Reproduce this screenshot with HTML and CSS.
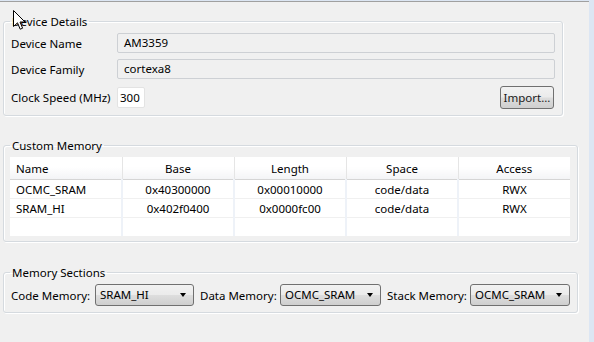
FILE: index.html
```html
<!DOCTYPE html>
<html lang="en">
<head>
    <meta charset="UTF-8">
    <title>Device Details</title>
    <link rel="stylesheet" href="styles.css">
</head>
<body>
    <div class="panel">
        <!-- Device Details -->
        <fieldset class="group group-device">
            <legend>Device Details</legend>
            <div class="row">
                <span class="label">Device Name</span>
                <div class="field readonly">AM3359</div>
            </div>
            <div class="row">
                <span class="label">Device Family</span>
                <div class="field readonly">cortexa8</div>
            </div>
            <div class="row row-clock">
                <span class="label">Clock Speed (MHz)</span>
                <div class="field speed">300</div>
                <button class="btn import-btn">Import...</button>
            </div>
        </fieldset>

        <!-- Custom Memory -->
        <fieldset class="group group-memory">
            <legend>Custom Memory</legend>
            <table class="mem-table">
                <thead>
                    <tr>
                        <th class="left">Name</th>
                        <th>Base</th>
                        <th>Length</th>
                        <th>Space</th>
                        <th>Access</th>
                    </tr>
                </thead>
                <tbody>
                    <tr>
                        <td class="left">OCMC_SRAM</td>
                        <td>0x40300000</td>
                        <td>0x00010000</td>
                        <td>code/data</td>
                        <td>RWX</td>
                    </tr>
                    <tr>
                        <td class="left">SRAM_HI</td>
                        <td>0x402f0400</td>
                        <td>0x0000fc00</td>
                        <td>code/data</td>
                        <td>RWX</td>
                    </tr>
                    <tr class="empty">
                        <td></td><td></td><td></td><td></td><td></td>
                    </tr>
                </tbody>
            </table>
        </fieldset>

        <!-- Memory Sections -->
        <fieldset class="group group-sections">
            <legend>Memory Sections</legend>
            <div class="row">
                <span class="combo-label code-label">Code Memory:</span>
                <div class="combo code-combo">SRAM_HI<span class="arrow"></span></div>
                <span class="combo-label data-label">Data Memory:</span>
                <div class="combo data-combo">OCMC_SRAM<span class="arrow"></span></div>
                <span class="combo-label stack-label">Stack Memory:</span>
                <div class="combo stack-combo">OCMC_SRAM<span class="arrow"></span></div>
            </div>
        </fieldset>
    </div>

    <svg class="cursor" width="13" height="21" viewBox="0 0 13 21">
        <path d="M0.5 0.5 L0.5 16.5 L4.5 12.8 L7.2 19.2 L9.6 18.2 L7 12 L12 12 Z" fill="#fff" stroke="#000" stroke-width="1" stroke-linejoin="miter"/>
    </svg>
</body>
</html>
```

FILE: styles.css
```css
body {
    margin: 0;
    padding-top: 1px;
    width: 594px;
    height: 341px;
    background-color: #dce6f3;
    font-family: "Noto Sans", "Liberation Sans", sans-serif;
    font-size: 11.5px;
    color: #000;
    overflow: hidden;
}

.panel {
    width: 589px;
    height: 340px;
    background-color: #f0f0f0;
    border-top: 1px solid #a0a0a0;
}

.group {
    margin: 0 0 0 3px;
    border: 1px solid #d5dadf;
    border-radius: 3px;
    box-shadow: inset 1px 1px 0 #fff, 1px 1px 0 #fff;
    min-width: 0;
}

.group legend {
    padding: 0 2px;
    line-height: 15px;
    height: 15px;
    white-space: nowrap;
}

.group-device {
    margin-top: 12px;
    width: 560px;
    box-sizing: border-box;
    padding: 4px 7px 6px 7px;
}

.group-device legend {
    margin-left: -1px;
}

.group-memory {
    margin-top: 22px;
    width: 575px;
    box-sizing: border-box;
    padding: 4px 6px 5px 6px;
}

.group-memory legend {
    margin-left: 0;
}

.group-sections {
    margin-top: 23px;
    width: 575px;
    box-sizing: border-box;
    padding: 4px 6px 6px 7px;
}

.group-sections legend {
    margin-left: -1px;
}

.row {
    display: flex;
    align-items: center;
    white-space: nowrap;
}

.group-device .row + .row {
    margin-top: 6px;
}

.group-device .row-clock {
    margin-top: 7px !important;
}

.label {
    width: 106px;
    flex-shrink: 0;
}

.field {
    box-sizing: border-box;
    height: 20px;
    line-height: 18px;
    border: 1px solid #cdd0d4;
    border-radius: 2px;
    padding-left: 6px;
}

.readonly {
    flex: 1;
    background-color: #f0f0f0;
}

.speed {
    width: 28px;
    height: 21px;
    line-height: 19px;
    padding-left: 2px;
    background: #fff;
    border-color: #e3e3e3;
}

.btn {
    font: inherit;
    color: #1a1a1a;
    box-sizing: border-box;
    border: 1px solid #707070;
    border-radius: 3px;
    background: linear-gradient(#f2f2f2 0%, #ebebeb 48%, #dddddd 52%, #cfcfcf 100%);
    padding: 0;
}

.import-btn {
    margin-left: auto;
    margin-right: 1px;
    width: 54px;
    height: 23px;
}

.mem-table {
    width: 560px;
    border-collapse: collapse;
    table-layout: fixed;
    background: #fff;
}

.mem-table th,
.mem-table td {
    text-align: center;
    padding: 0;
    font-weight: normal;
    white-space: nowrap;
}

.mem-table th {
    height: 22px;
    background: linear-gradient(#ffffff 0%, #ffffff 45%, #f3f4f6 100%);
    border-bottom: 1px solid #d5d5d5;
    border-right: 1px solid #e5e5e5;
}

.mem-table td {
    height: 18px;
    border-bottom: 1px solid #f0f0f0;
    border-right: 2px solid #eef2f8;
}

.mem-table th:last-child,
.mem-table td:last-child {
    border-right: none;
}

.mem-table .empty td {
    height: 18px;
    border-bottom: none;
}

.mem-table .left {
    text-align: left;
    padding-left: 6px;
}

.combo-label {
    flex-shrink: 0;
}

.code-label {
    width: 84px;
}

.data-label {
    width: 80px;
    margin-left: 6px;
}

.stack-label {
    width: 83px;
    margin-left: 6px;
}

.combo {
    position: relative;
    flex-shrink: 0;
    box-sizing: border-box;
    height: 22px;
    line-height: 20px;
    padding-left: 4px;
    border: 1px solid #707070;
    border-radius: 3px;
    background: linear-gradient(#f2f2f2 0%, #ebebeb 48%, #dddddd 52%, #cfcfcf 100%);
}

.code-combo {
    width: 99px;
}

.data-combo {
    width: 101px;
}

.stack-combo {
    width: 100px;
}

.arrow {
    position: absolute;
    right: 7px;
    top: 8px;
    width: 0;
    height: 0;
    border-left: 3.5px solid transparent;
    border-right: 3.5px solid transparent;
    border-top: 4px solid #000;
}

.cursor {
    position: absolute;
    left: 13px;
    top: 10px;
}
```
